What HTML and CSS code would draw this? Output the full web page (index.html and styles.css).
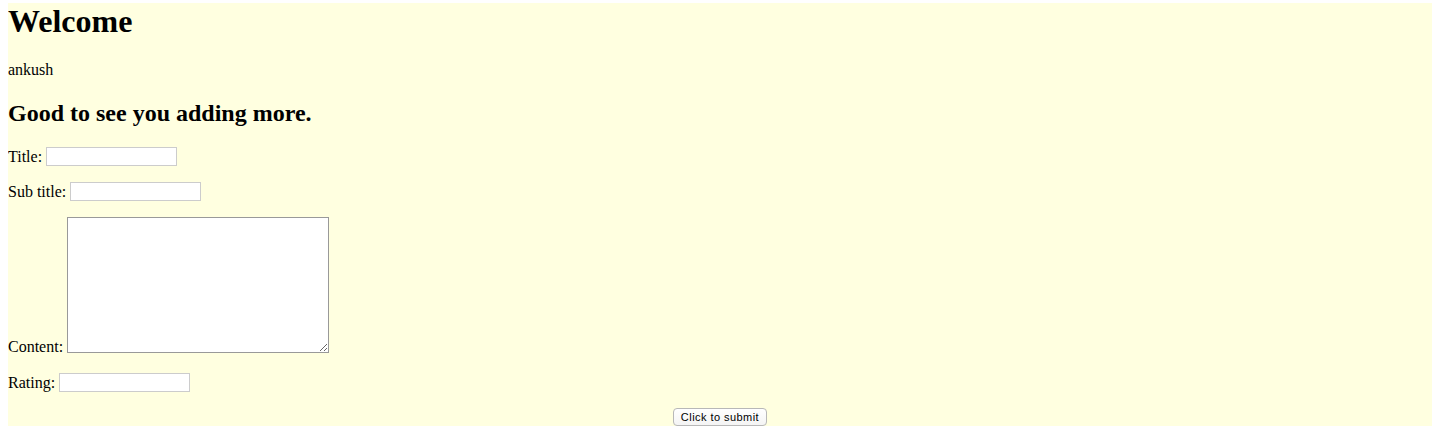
FILE: index.html
```html
<!DOCTYPE html>
<html>
<head>
<meta charset="utf-8">
<link rel="stylesheet" href="styles.css">
</head>
<body>
<div class="page">
  <h1 class="title">Welcome</h1>
  <p class="user">ankush</p>
  <h2 class="subtitle">Good to see you adding more.</h2>
  <form class="form">
    <p class="field">Title: <input class="text-input" type="text"></p>
    <p class="field">Sub title: <input class="text-input" type="text"></p>
    <p class="field field-area">Content: <textarea class="area"></textarea></p>
    <p class="field">Rating: <input class="text-input" type="text"></p>
    <div class="actions"><button class="submit" type="button">Click to submit</button></div>
  </form>
</div>
</body>
</html>
```

FILE: styles.css
```css
html, body {
  background: #ffffff;
}
body {
  margin: 3px 8px 0 8px;
  font-family: "Liberation Serif", "Times New Roman", serif;
  font-size: 16px;
  color: #000;
}
.page {
  background: #ffffe0;
  display: flow-root;
}
.title {
  font-size: 32px;
  font-weight: bold;
  margin: 0 0 21px 0;
  line-height: 37px;
}
.user {
  margin: 0 0 20px 0;
  line-height: 18px;
}
.subtitle {
  font-size: 24px;
  font-weight: bold;
  margin: 0 0 20px 0;
  line-height: 28px;
}
.form {
  margin: 0;
}
.field {
  margin: 0 0 16px 0;
  line-height: 18px;
}
.field-area {
  padding-bottom: 1px;
}
.text-input {
  box-sizing: border-box;
  width: 131px;
  height: 19px;
  border: 1px solid #cccccc;
  background: #ffffff;
  padding: 0 2px;
  margin: 0;
  vertical-align: bottom;
  font-size: 13px;
}
.area {
  box-sizing: border-box;
  width: 262px;
  height: 136px;
  border: 1px solid #999999;
  background: #ffffff;
  margin: 0;
  padding: 2px;
  vertical-align: -1px;
}
.actions {
  text-align: center;
  height: 18px;
  line-height: 18px;
}
.submit {
  box-sizing: border-box;
  width: 94px;
  height: 18px;
  padding: 0;
  margin: 0;
  border: 1px solid #b8b8b8;
  border-radius: 4px;
  background: linear-gradient(#ffffff, #f4f4f4);
  font-family: "Liberation Sans", Arial, sans-serif;
  font-size: 11px;
  letter-spacing: 0.45px;
  color: #000;
  vertical-align: top;
}
```
